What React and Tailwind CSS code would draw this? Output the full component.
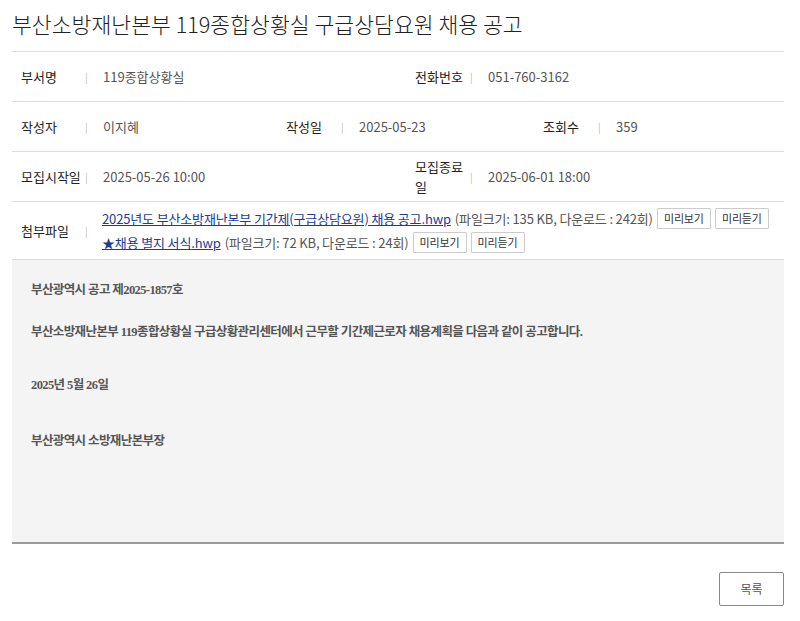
import React from "react";

const sans = { fontFamily: '"Noto Sans CJK KR", "Noto Sans", sans-serif' };

function Cell({ label, children, wide = false }) {
  return (
    <div className="flex items-center h-full pl-[9px]">
      <div className={`${wide ? "w-[64px]" : "w-[55px]"} flex items-center text-[13px] text-[#222] leading-[20px]`}>
        {label}
      </div>
      <span className="text-[#bbb] text-[10px] w-[18px]">|</span>
      <div className="text-[13px] text-[#555]">{children}</div>
    </div>
  );
}

function SmallBtn({ children }) {
  return (
    <button className="ml-1 h-[21px] w-[54px] border border-[#ccc] bg-white text-[11px] text-[#333] leading-none rounded-[1px]">
      {children}
    </button>
  );
}

export default function App() {
  return (
    <div className="bg-white min-h-screen pl-3 pr-4 text-[#333]" style={sans}>
      <h1 className="text-[21.6px] font-light text-[#222] pt-[9px] pb-[13px] leading-[29px]">
        부산소방재난본부 119종합상황실 구급상담요원 채용 공고
      </h1>

      <div className="border-t border-[#ddd]">
        <div className="grid grid-cols-[394px_1fr] h-[50px] border-b border-[#ddd]">
          <Cell label="부서명" wide>119종합상황실</Cell>
          <Cell label="전화번호">051-760-3162</Cell>
        </div>

        <div className="grid grid-cols-[265px_257px_1fr] h-[50px] border-b border-[#ddd]">
          <Cell label="작성자" wide>이지혜</Cell>
          <Cell label="작성일">2025-05-23</Cell>
          <Cell label="조회수">359</Cell>
        </div>

        <div className="grid grid-cols-[394px_1fr] h-[50px] border-b border-[#ddd]">
          <Cell label="모집시작일" wide>2025-05-26 10:00</Cell>
          <Cell label={<span>모집종료<br />일</span>}>2025-06-01 18:00</Cell>
        </div>

        <div className="flex items-center h-[58px] border-b border-[#ddd] pl-[9px]">
          <div className="w-[64px] text-[13px] text-[#222]">첨부파일</div>
          <span className="text-[#bbb] text-[10px] w-[17px]">|</span>
          <div className="text-[13px] text-[#555] leading-[24px] tracking-[-0.15px]">
            <div className="flex items-center">
              <a href="#" className="text-[#1b3d94] underline">2025년도 부산소방재난본부 기간제(구급상담요원) 채용 공고</a>
              <a href="#" className="text-[#1b3d94] underline">.hwp</a>
              <span className="ml-1">(파일크기: 135 KB, 다운로드 : 242회)</span>
              <SmallBtn>미리보기</SmallBtn>
              <SmallBtn>미리듣기</SmallBtn>
            </div>
            <div className="flex items-center">
              <a href="#" className="text-[#1b3d94] underline">★채용 별지 서식</a>
              <a href="#" className="text-[#1b3d94] underline">.hwp</a>
              <span className="ml-1">(파일크기: 72 KB, 다운로드 : 24회)</span>
              <SmallBtn>미리보기</SmallBtn>
              <SmallBtn>미리듣기</SmallBtn>
            </div>
          </div>
        </div>

        <div
          className="bg-[#f4f4f4] h-[284px] px-[19px] pt-[20px] text-[12.5px] tracking-[-0.6px] font-bold text-[#555] border-b-2 border-[#999]"
          style={{ fontFamily: '"Liberation Serif", "Noto Sans CJK KR", serif' }}
        >
          <p className="leading-[20px]">부산광역시 공고 제2025-1857호</p>
          <p className="leading-[20px] mt-[22px]">
            부산소방재난본부 119종합상황실 구급상황관리센터에서 근무할 기간제근로자 채용계획을 다음과 같이 공고합니다.
          </p>
          <p className="leading-[20px] mt-[33px]">2025년 5월 26일</p>
          <p className="leading-[20px] mt-[36px]">부산광역시 소방재난본부장</p>
        </div>
      </div>

      <div className="flex justify-end pt-[28px]">
        <button className="w-[65px] h-[34px] border border-[#888] bg-white text-[12px] text-[#555] rounded-[2px]">
          목록
        </button>
      </div>
    </div>
  );
}
